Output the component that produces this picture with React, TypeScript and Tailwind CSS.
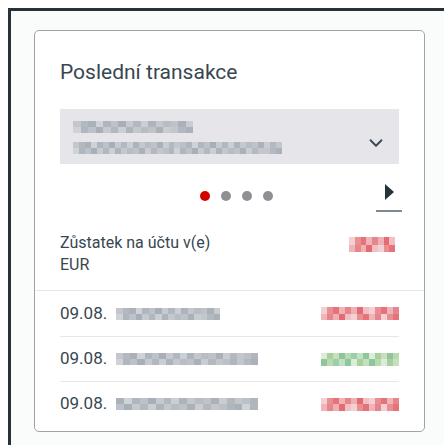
import { ChevronDown } from 'lucide-react'

// masked values: two rows of colour tiles, softened so they read as redacted text
function Masked({ tiles, className }: { tiles: string[]; className?: string }) {
  const bottom = [...tiles.slice(3), ...tiles.slice(0, 3)]
  return (
    <span className={`inline-flex h-[10px] flex-col blur-[0.7px] ${className ?? ''}`}>
      {[tiles, bottom].map((row, r) => (
        <span key={r} className="flex flex-1">
          {row.map((c, i) => (
            <span key={i} className="h-full flex-1" style={{ background: c }} />
          ))}
        </span>
      ))}
    </span>
  )
}

const grayA = ['#c3c7cd', '#b3b9c1', '#aab1b9', '#cfd2d6', '#b0b6be', '#bcc2c9', '#a8afb8', '#c6cacf', '#b2b8bf', '#cbced2', '#aeb4bb', '#c4c8cd', '#b8bdc4', '#bfc3c8', '#abb1b9', '#c9ccd0', '#b4b9c0', '#c3c7cc', '#bcc1c7', '#b0b6bd']
const red = ['#f3d0d2', '#e98e93', '#e57379', '#f0b3b7', '#e6858b', '#eeb0b5', '#e46b72', '#f2c0c3']
const green = ['#dcecd6', '#a9cf9d', '#c6e0bd', '#8fc49c', '#b8dab0', '#9ccfa9', '#c2e1c4', '#8cc7a0']

const rows = [
  { tiles: grayA.slice(0, 16), w: 'w-[104px]', amount: red },
  { tiles: grayA, w: 'w-[142px]', amount: green },
  { tiles: grayA.slice(2, 20), w: 'w-[142px]', amount: red },
]

export default function App() {
  return (
    <div className="h-[445px] w-[444px] bg-white pl-[8px] pt-[8px]" style={{ fontFamily: 'Roboto, "Noto Sans", sans-serif' }}>
      <div className="h-full border-l-[3px] border-t-[3px] border-[#263238] bg-[#fafbfb] pl-[23px] pt-[19px]">
        <div className="h-[402px] w-[391px] rounded-[5px] border border-[#9ea3a6] bg-white text-[#37474f]">
          <div className="px-[25px] pt-[28px]">
            <h2 className="text-[21px] leading-[26px]">Poslední transakce</h2>

            <div className="mt-[24px] flex h-[55px] items-center justify-between bg-[#e6e6ea] pl-[13px] pr-[12px]">
              <div className="flex flex-col gap-[9px] pt-[2px]">
                <Masked tiles={grayA.slice(0, 16)} className="h-[12px] w-[120px]" />
                <Masked tiles={[...grayA, ...grayA.slice(3, 18)]} className="h-[12px] w-[209px]" />
              </div>
              <ChevronDown className="mt-[12px] h-[22px] w-[22px] text-[#37474f]" strokeWidth={2} />
            </div>

            <div className="relative mt-[26px] flex h-[12px] items-center justify-center gap-[11px] pl-[14px]">
              <span className="h-[10px] w-[10px] rounded-full bg-[#d30000]" />
              <span className="h-[10px] w-[10px] rounded-full bg-[#8f9094]" />
              <span className="h-[10px] w-[10px] rounded-full bg-[#8f9094]" />
              <span className="h-[10px] w-[10px] rounded-full bg-[#8f9094]" />
              <div className="absolute -right-[3px] -top-[6px] flex w-[26px] flex-col items-center">
                <svg width="10" height="16" viewBox="0 0 10 16">
                  <path d="M1 0 L10 8 L1 16 Z" fill="#263238" />
                </svg>
                <span className="mt-[10px] h-[2px] w-full bg-[#7d8a90]" />
              </div>
            </div>

            <div className="mt-[30px] flex items-start justify-between">
              <div className="text-[16px] leading-[22px]">
                <div>Zůstatek na účtu v(e)</div>
                <div>EUR</div>
              </div>
              <Masked tiles={red} className="mr-[4px] mt-[5px] h-[15px] w-[46px]" />
            </div>
          </div>

          <div className="mt-[14px] border-t border-[#e6e7e8]" />

          <div className="px-[25px]">
            {rows.map((r, i) => (
              <div key={i} className={`flex h-[45px] items-center justify-between ${i > 0 ? 'border-t border-[#e6e7e8]' : ''}`}>
                <div className="flex items-center gap-[9px] text-[17px]">
                  <span>09.08.</span>
                  <Masked tiles={r.tiles} className={`h-[12px] ${r.w}`} />
                </div>
                <Masked tiles={[...r.amount, ...r.amount.slice(0, 5)]} className="h-[13px] w-[78px]" />
              </div>
            ))}
          </div>
        </div>
      </div>
    </div>
  )
}
